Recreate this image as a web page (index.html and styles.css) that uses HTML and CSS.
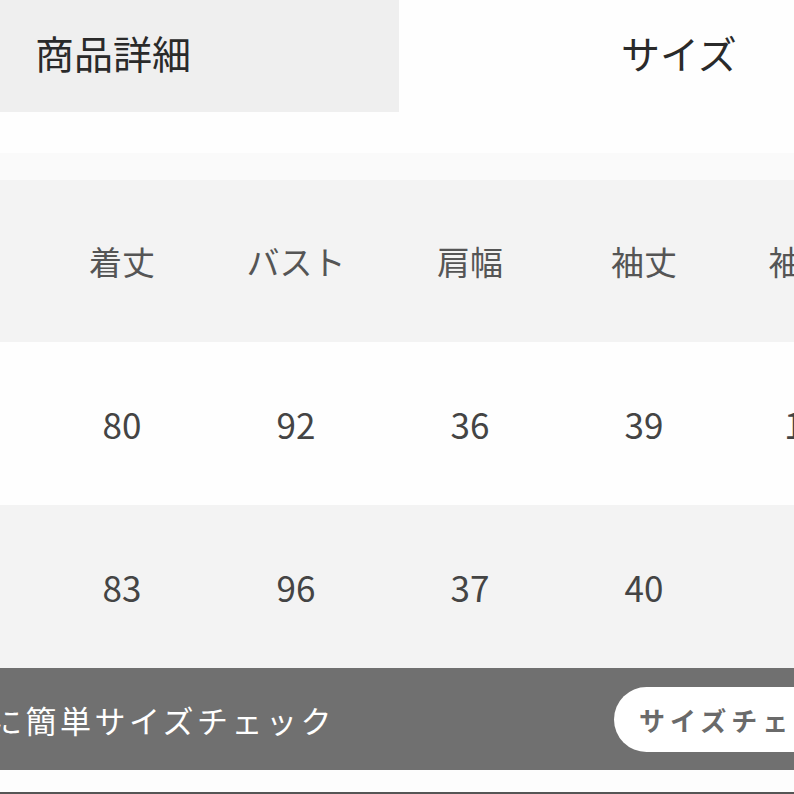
FILE: index.html
```html
<!DOCTYPE html>
<html lang="ja">
<head>
<meta charset="utf-8">
<link rel="stylesheet" href="styles.css">
</head>
<body>
<div class="page">
  <div class="tabs">
    <div class="tab tab-left">商品詳細</div>
    <div class="tab tab-right">サイズ</div>
  </div>
  <div class="spacer">
    <div class="spacer-white"></div>
    <div class="spacer-soft"></div>
  </div>
  <div class="table">
    <div class="row row-head">
      <div class="cell"></div>
      <div class="cell">着丈</div>
      <div class="cell">バスト</div>
      <div class="cell">肩幅</div>
      <div class="cell">袖丈</div>
      <div class="cell">袖ぐり</div>
    </div>
    <div class="row row-white">
      <div class="cell num">M</div>
      <div class="cell num">80</div>
      <div class="cell num">92</div>
      <div class="cell num">36</div>
      <div class="cell num">39</div>
      <div class="cell num">17.5</div>
    </div>
    <div class="row row-gray">
      <div class="cell num">L</div>
      <div class="cell num">83</div>
      <div class="cell num">96</div>
      <div class="cell num">37</div>
      <div class="cell num">40</div>
      <div class="cell num">18</div>
    </div>
  </div>
  <div class="bar">
    <div class="bar-text">に簡単サイズチェック</div>
    <div class="bar-btn">サイズチェック</div>
  </div>
  <div class="footer"></div>
</div>
</body>
</html>
```

FILE: styles.css
```css
html, body {
  margin: 0;
  padding: 0;
  background: #ffffff;
}
.page {
  width: 794px;
  height: 794px;
  overflow: hidden;
  font-family: "Noto Sans CJK JP", "Noto Sans", sans-serif;
  color: #333;
}
.tabs {
  display: flex;
  height: 112px;
}
.tab {
  font-size: 39px;
  line-height: 1;
  color: #2a2a2a;
  display: flex;
  align-items: center;
  padding-bottom: 8px;
  box-sizing: border-box;
}
.tab-left {
  width: 399px;
  background: #efefef;
  padding-left: 35px;
}
.tab-right {
  flex: 1;
  background: #fefefe;
  padding-left: 222px;
}
.spacer {
  height: 68px;
  display: flex;
  flex-direction: column;
}
.spacer-white {
  height: 41px;
  background: #fefefe;
}
.spacer-soft {
  flex: 1;
  background: #fafafa;
}
.table {
  display: flex;
  flex-direction: column;
}
.row {
  display: flex;
  align-items: center;
  margin-left: -139px;
  overflow: hidden;
}
.row-head {
  height: 162px;
  background: #f3f3f3;
  font-size: 33px;
  color: #555;
}
.row-white {
  height: 163px;
  background: #fefefe;
}
.row-gray {
  height: 163px;
  background: #f3f3f3;
}
.cell {
  width: 174px;
  flex-shrink: 0;
  text-align: center;
  white-space: nowrap;
  line-height: 1;
}
.num {
  font-size: 35px;
  color: #444;
}
.bar {
  height: 102px;
  background: #707070;
  display: flex;
  align-items: center;
  justify-content: space-between;
  overflow: hidden;
}
.bar-text {
  margin-left: -9px;
  font-size: 31px;
  letter-spacing: 3.5px;
  color: #ffffff;
  white-space: nowrap;
  line-height: 1;
}
.bar-btn {
  width: 220px;
  height: 65px;
  margin-right: -40px;
  flex-shrink: 0;
  background: #ffffff;
  border-radius: 33px;
  box-sizing: border-box;
  padding-left: 25px;
  display: flex;
  align-items: center;
  font-size: 26px;
  letter-spacing: 5px;
  font-weight: 700;
  color: #6a6a6a;
  white-space: nowrap;
  overflow: hidden;
}
.footer {
  height: 22px;
  background: #fdfdfd;
  border-bottom: 2px solid #555;
  box-sizing: content-box;
}
```
